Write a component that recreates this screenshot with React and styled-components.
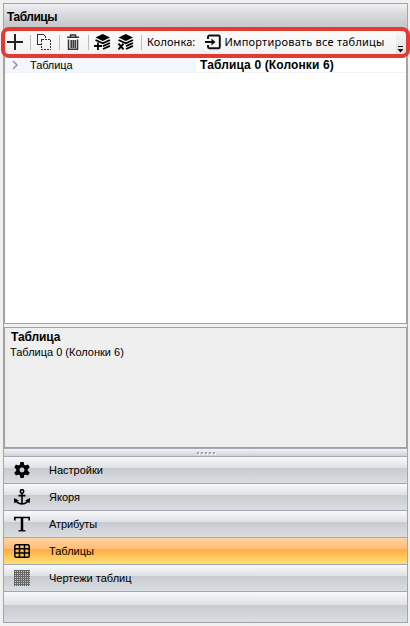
import React from 'react';
import styled, { createGlobalStyle, css } from 'styled-components';

const Global = createGlobalStyle`
  * { box-sizing: border-box; }
  body { margin: 0; background: #f0f0f0; color: #000; font-family: "Liberation Sans", Arial, sans-serif; font-size: 11px; }
  svg { display: block; flex: none; }
`;

const Window = styled.main`
  position: relative;
  width: 410px;
  height: 626px;
  padding: 3px 2px 3px 3px;
  background: #f0f0f0;
`;
const Panel = styled.section`
  display: flex;
  flex-direction: column;
  width: 405px;
  height: 620px;
  border: 1px solid #a2a5b0;
`;
const Label = styled.span`
  white-space: pre;
  line-height: 14px;
  font-size: ${(p) => p.$size || 11}px;
  letter-spacing: ${(p) => p.$spacing || 0}px;
  font-weight: ${(p) => (p.$bold ? 700 : 400)};
`;
const UiLabel = styled(Label)`
  font-family: "Noto Sans", "Open Sans", sans-serif;
`;
const Header = styled.header`
  height: 25px;
  flex: none;
  padding: 6px 0 0 3px;
  background: linear-gradient(#f0f0f3, #dcdde0 35%, #c6c8cc 85%, #c9cbcf);
`;
const Toolbar = styled.div`
  display: flex;
  align-items: center;
  height: 28px;
  flex: none;
  padding: 0 0 2px 3px;
  background: linear-gradient(#fcfcfc, #f0f0f0);
`;
const ToolIcon = styled.span`
  display: flex;
  margin-left: ${(p) => p.$gap || 0}px;
`;
const Divider = styled.i`
  width: 1px;
  height: 15px;
  margin-left: ${(p) => p.$gap}px;
  background: #bdbdbd;
`;
const Frame = styled.div`
  position: absolute;
  left: 1px;
  top: 27px;
  width: 409px;
  height: 31px;
  border: 4px solid #e43a30;
  border-radius: 8px;
`;
const Overflow = styled.div`
  position: absolute;
  left: 396px;
  top: 31px;
  width: 10px;
  height: 23px;
  display: flex;
  align-items: flex-end;
  background: linear-gradient(#f8f8f8, #dedede);
  border-radius: 0 3px 3px 0;
`;
const Grid = styled.div`
  height: 267px;
  flex: none;
  background: #fff;
  border: solid #a0a0a0;
  border-width: 0 1px 1px;
`;
const GridRow = styled.div`
  display: grid;
  grid-template-columns: 191px 1fr;
  height: 16px;
  border-bottom: 1px solid #f0f3fa;
`;
const NameCell = styled.div`
  display: flex;
  align-items: center;
  padding-left: 6px;
  gap: 10px;
  background: #f3f6fc;
`;
const ValueCell = styled.div`
  display: flex;
  align-items: center;
  padding-left: 4px;
`;
const Description = styled.div`
  display: flex;
  flex-direction: column;
  height: 121px;
  flex: none;
  margin-top: 3px;
  padding: 2px 0 0 6px;
  background: #efefef;
  border: 1px solid #a0a0a0;
`;
const DescriptionText = styled(Label)`
  margin: 1px 0 0 -1px;
`;
const Splitter = styled.div`
  display: flex;
  justify-content: center;
  align-items: center;
  gap: 2px;
  height: 8px;
  flex: none;
  padding-right: 0;
  border-top: 1px solid #a2a7b2;
  background: linear-gradient(#f3f5f6, #cdd1d6);
`;
const Grip = styled.i`
  width: 2px;
  height: 2px;
  background: #9da2ab;
  box-shadow: 1px 1px #fff;
`;
const NavItem = styled.div`
  display: flex;
  align-items: center;
  height: ${(p) => (p.$tall ? 31 : 27)}px;
  flex: none;
  padding-left: 10px;
  border-top: 1px solid #a2a9b5;
  background: linear-gradient(#f8f9fa, #dfe1e5 42%, #c8cbd0 44%, #dadee3);
  ${(p) => p.$active && css`background: linear-gradient(#ffd3a2, #ffbd77 42%, #ffad42 44%, #ffe178);`}
`;
const NavIcon = styled.span`
  display: flex;
  width: 35px;
  padding-bottom: 1px;
`;

const S = ({ children, size = 16, w = size, view = '0 0 18 18', ...rest }) => (
  <svg width={w} height={size} viewBox={view} fill="none" stroke="#111" {...rest}>{children}</svg>
);
const Plus = () => <S view="0 0 16 16" stroke="#222" strokeWidth="2"><path d="M0 8h16M8 0v16" /></S>;
const Copy = () => (
  <S stroke="#333" w={14} view="0 0 14 16" shapeRendering="crispEdges">
    <path d="M3.5 10.5h-3v-10h6l2 2v1" />
    <path d="M4.5 5.5h9v10h-9z" strokeDasharray="2 1" />
  </S>
);
const Trash = () => (
  <S stroke="#333" w={14} view="0 0 14 16" strokeWidth="1.5">
    <path d="M1 3.3h12M4.5 3V1h5v2M2.5 5.5v9.7h9V5.5M5.2 6v8M7.2 6v8M9.2 6v8" />
  </S>
);
const Layers = ({ cross }) => (
  <S w={17} size={16} view="0 0 17 16" stroke="#000">
    <path d="M8.8 0L16 3.5 8.8 7 1.5 3.5z" fill="#000" stroke="none" />
    <path d="M1.5 6l7.3 3.3L16 6M9 12.1l7-3.1M9 15l7-3.1" strokeWidth="1.8" />
    {cross ? <path d="M1.5 9.7l5 5.6M6.5 9.7l-5 5.6" strokeWidth="2" />
      : <path d="M0 12h8M4 8.5V16" strokeWidth="1.8" />}
  </S>
);
const Import = () => (
  <S w={17} size={16} view="0 0 17 16" strokeWidth="1.9">
    <path d="M4 5V3Q4 1.5 5.5 1.5H14.5Q15.8 1.5 15.8 2.8V13Q15.8 14.3 14.5 14.3H5.5Q4 14.3 4 12.8V11M1 8h9" />
    <path d="M7.5 4.5L11.5 8 7.5 11.5z" fill="#111" stroke="none" />
  </S>
);
const teeth = [0, 60, 120, 180, 240, 300];
const Gear = () => (
  <S stroke="none" fill="#000">
    <path fillRule="evenodd" d="M9 2.5a6.5 6.5 0 1 0 0 13A6.5 6.5 0 1 0 9 2.5M9 6.2a2.8 2.8 0 1 1 0 5.6A2.8 2.8 0 1 1 9 6.2" />
    {teeth.map((a) => <path key={a} d="M6.5 4l.6-4h3.8l.6 4z" transform={`rotate(${a} 9 9)`} />)}
  </S>
);
const Anchor = () => (
  <S stroke="#000" strokeWidth="1.8">
    <circle cx="9" cy="2.7" r="1.9" />
    <path d="M9 5v12M5 7.5h8M2 12c.5 3 3.5 4.5 7 4.8 3.500-.3 6.500-1.800 7-4.800" />
    <path d="M0 10.200l5.500 3L.3 16zM18 10.200l-5.500 3 5.200 2.800z" fill="#000" stroke="none" />
  </S>
);
const Letter = () => (
  <S view="0 0 16 16" stroke="#000"><path d="M.8 4.500V1.500h14.400v3" strokeWidth="1.6" /><path d="M8 1v14" strokeWidth="2.5" /><path d="M4.500 14.800h7" strokeWidth="1.300" /></S>
);
const Table = () => (
  <S view="0 0 16 16" stroke="#000" strokeWidth="1.500"><rect x=".8" y="1.800" width="14.400" height="12.400" rx="1.500" /><path d="M0 5.800h16M0 10h16M5.500 2v12M10.500 2v12" /></S>
);
const Mesh = () => (
  <S view="0 0 16 16" shapeRendering="crispEdges">
    <rect width="16" height="16" fill="#686868" stroke="none" />
    {[...Array(64)].map((_, i) => <rect key={i} x={(i % 8) * 2 + 1} y={Math.floor(i / 8) * 2 + 1} width="1" height="1" fill="#c4c6c9" stroke="none" />)}
  </S>
);

const items = [
  { icon: Gear, text: 'Настройки', spacing: 0 },
  { icon: Anchor, text: 'Якоря', spacing: 0 },
  { icon: Letter, text: 'Атрибуты', spacing: -0.1 },
  { icon: Table, text: 'Таблицы', spacing: 0, active: true },
  { icon: Mesh, text: 'Чертежи таблиц', spacing: 0 },
];

export default function App() {
  return (
    <>
      <Global />
      <Window>
        <Panel>
          <Header><Label $bold $size={12} $spacing={-0.5}>Таблицы</Label></Header>
          <Toolbar>
            <ToolIcon><Plus /></ToolIcon>
            <Divider $gap={7} />
            <ToolIcon $gap={6}><Copy /></ToolIcon>
            <Divider $gap={8} />
            <ToolIcon $gap={6}><Trash /></ToolIcon>
            <Divider $gap={8} />
            <ToolIcon $gap={5}><Layers /></ToolIcon>
            <ToolIcon $gap={6}><Layers cross /></ToolIcon>
            <Divider $gap={7} />
            <ToolIcon $gap={5}><UiLabel $spacing={0.1}>Колонка:</UiLabel></ToolIcon>
            <ToolIcon $gap={9}><Import /></ToolIcon>
            <ToolIcon $gap={3}><UiLabel $spacing={0.23}>Импортировать все таблицы</UiLabel></ToolIcon>
          </Toolbar>
          <Grid>
            <GridRow>
              <NameCell>
                <S w={9} size={10} view="0 0 9 10" stroke="#999" strokeWidth="1.6"><path d="M2 1l4 4-4 4" /></S>
                <Label $spacing={-0.1}>Таблица</Label>
              </NameCell>
              <ValueCell><Label $bold $size={12} $spacing={0.13}>Таблица 0 (Колонки 6)</Label></ValueCell>
            </GridRow>
          </Grid>
          <Description>
            <Label $bold $size={12} $spacing={-0.1}>Таблица</Label>
            <DescriptionText>Таблица 0 (Колонки 6)</DescriptionText>
          </Description>
          <Splitter>{[0, 1, 2, 3, 4].map((n) => <Grip key={n} />)}</Splitter>
          {items.map(({ icon: Icon, text, spacing, active }) => (
            <NavItem key={text} $active={active}>
              <NavIcon><Icon /></NavIcon>
              <Label $spacing={spacing}>{text}</Label>
            </NavItem>
          ))}
          <NavItem $tall />
        </Panel>
        <Overflow><S w={10} size={10} view="0 0 10 10" stroke="#111"><path d="M2 2.5h5" /><path d="M1.500 5h6L4.500 8.500z" fill="#111" stroke="none" /></S></Overflow>
        <Frame />
      </Window>
    </>
  );
}
